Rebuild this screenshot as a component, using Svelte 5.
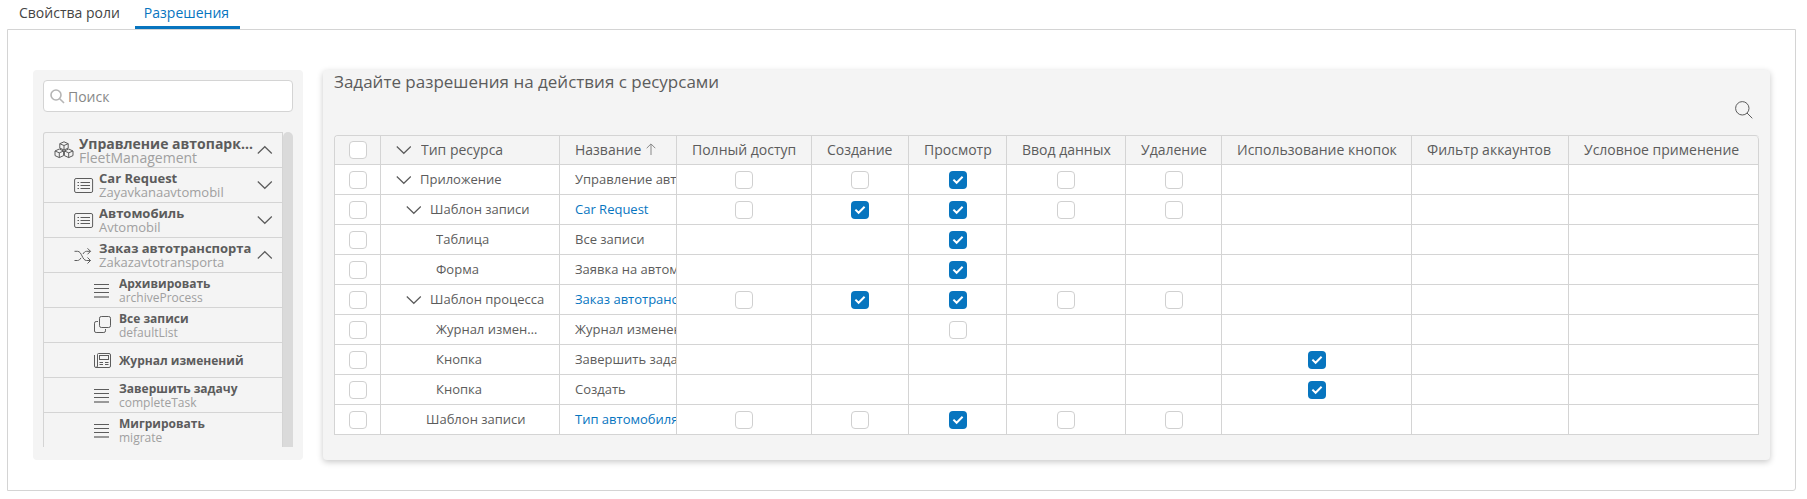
<script>
  const tree = [
    { level: 0, icon: 'cubes', title: 'Управление автопарком', alias: 'FleetManagement', arrow: 'up' },
    { level: 1, icon: 'record', title: 'Car Request', alias: 'Zayavkanaavtomobil', arrow: 'down' },
    { level: 1, icon: 'record', title: 'Автомобиль', alias: 'Avtomobil', arrow: 'down' },
    { level: 1, icon: 'process', title: 'Заказ автотранспорта', alias: 'Zakazavtotransporta', arrow: 'up' },
    { level: 2, icon: 'lines', title: 'Архивировать', alias: 'archiveProcess' },
    { level: 2, icon: 'copy', title: 'Все записи', alias: 'defaultList' },
    { level: 2, icon: 'journal', title: 'Журнал изменений' },
    { level: 2, icon: 'lines', title: 'Завершить задачу', alias: 'completeTask' },
    { level: 2, icon: 'lines', title: 'Мигрировать', alias: 'migrate' }
  ];

  const actions = [
    'Полный доступ', 'Создание', 'Просмотр', 'Ввод данных', 'Удаление',
    'Использование кнопок', 'Фильтр аккаунтов', 'Условное применение'
  ];

  // One mark per action column: 1 checked, 0 unchecked, - not applicable
  const rows = [
    { kind: 'app', arrow: true, type: 'Приложение', name: 'Управление автопарком', marks: '00100---' },
    { kind: 'template', arrow: true, type: 'Шаблон записи', name: 'Car Request', link: true, marks: '01100---' },
    { kind: 'leaf', type: 'Таблица', name: 'Все записи', marks: '--1-----' },
    { kind: 'leaf', type: 'Форма', name: 'Заявка на автомобиль', marks: '--1-----' },
    { kind: 'template', arrow: true, type: 'Шаблон процесса', name: 'Заказ автотранспорта', link: true, marks: '01100---' },
    { kind: 'leaf', type: 'Журнал изменений', name: 'Журнал изменений', marks: '--0-----' },
    { kind: 'leaf', type: 'Кнопка', name: 'Завершить задачу', marks: '-----1--' },
    { kind: 'leaf', type: 'Кнопка', name: 'Создать', marks: '-----1--' },
    { kind: 'single', type: 'Шаблон записи', name: 'Тип автомобиля', link: true, marks: '00100---' }
  ];
</script>

{#snippet check(on)}
  <span class="check" class:on>
    {#if on}
      <svg width="18" height="18" viewBox="0 0 18 18"><path d="M4.400 8.600l3.200 3.200 6-6" /></svg>
    {/if}
  </span>
{/snippet}

{#snippet chevron(up)}
  <svg class="chevron" width="16" height="10" viewBox="0 0 16 10">
    <path d={up ? 'M.8 8.500L7.800 1.700l7 6.800' : 'M.8 1.500L7.800 8.300l7-6.800'} />
  </svg>
{/snippet}

{#snippet glyph(name)}
  <svg class="glyph" width="20" height="18" viewBox="0 0 20 18">
    {#if name === 'cubes'}
      <path d="M10 .8l4.2 1.9v4.4L10 9 5.8 7.1V2.7zM5.8 2.7L10 4.5l4.2-1.8M10 4.5V9M5.3 8l4.3 2v4.6l-4.3 2L1 14.6V10zM1 10l4.3 1.8L9.6 10M5.3 11.8v4.8M14.7 8l4.3 2v4.6l-4.3 2-4.3-2V10zM10.4 10l4.3 1.8L19 10M14.7 11.8v4.8" />
    {:else if name === 'record'}
      <rect x=".6" y="2.500" width="18" height="14" rx="1.500" />
      <path d="M6.500 6.500H16M6.500 9.500H16M6.500 12.500H16M3.500 6.500H5M3.500 9.500H5M3.500 12.500H5" />
    {:else if name === 'process'}
      <path d="M.5 5.300H3.500C8 5.300 8 14.500 12.500 14.500H16.500M.5 14.500H3.500C5 14.500 6 13.500 7 11.900M9 8C10 6.300 11 5.300 12.500 5.300H16.500M13.500 2.300l3 3-3 3M13.500 11.500l3 3-3 3" />
    {:else if name === 'lines'}
      <path d="M0 3.500H15M0 7.500H15M0 11.500H15" />
      <path class="soft" d="M0 16H15" />
    {:else if name === 'copy'}
      <rect x="5.500" y=".5" width="11" height="11" rx="1.800" />
      <path d="M4 5.500H2.200Q.5 5.500.5 7.200V15Q.5 16.500 2.200 16.500H9.800Q11.500 16.500 11.500 14.800V13" />
    {:else}
      <g transform="translate(0 1)">
        <path d="M4.500 1.500H15Q16.500 1.500 16.500 3V14Q16.500 15.500 15 15.500H2Q.5 15.500.5 14V3M3.500 14V2.500Q3.500 1.500 4.500 1.500M3.500 13.500Q3.500 15.500 2 15.500M5.500 10.500H9M11 10.500H14.500M5.500 12.500H9M11 12.500H14.500" />
        <rect x="5.500" y="3.500" width="9" height="4" />
      </g>
    {/if}
  </svg>
{/snippet}

<main>
  <nav class="tabs">
    <a class="tab">Свойства роли</a>
    <a class="tab active">Разрешения</a>
  </nav>

  <section class="page">
    <aside>
      <label class="search">
        <svg width="15" height="15" viewBox="0 0 15 15"><circle cx="6" cy="6" r="5" /><path d="M9.700 9.700l4.300 4.300" /></svg>
        <span>Поиск</span>
      </label>
      <div class="tree-box">
        <div class="tree">
          {#each tree as item}
            <div class="node level{item.level}">
              {@render glyph(item.icon)}
              <div class="labels">
                <b>{item.title}</b>
                {#if item.alias}<span>{item.alias}</span>{/if}
              </div>
              {#if item.arrow}{@render chevron(item.arrow === 'up')}{/if}
            </div>
          {/each}
        </div>
        <div class="scrollbar"></div>
      </div>
    </aside>

    <article>
      <h1>Задайте разрешения на действия с ресурсами</h1>
      <div class="toolbar">
        <svg width="18" height="18" viewBox="0 0 18 18"><circle cx="7.300" cy="7.300" r="6.700" /><path d="M12 12l5.300 5.300" /></svg>
      </div>
      <div class="grid">
        <div class="row head">
          <div class="cell center">{@render check(false)}</div>
          <div class="cell type">{@render chevron(false)}<span>Тип ресурса</span></div>
          <div class="cell name">
            <span>Название</span>
            <svg class="sort" width="10" height="12" viewBox="0 0 10 12"><path d="M5 12V1M.7 5.200L5 .9l4.300 4.300" /></svg>
          </div>
          {#each actions as action}
            <div class="cell name">{action}</div>
          {/each}
        </div>
        {#each rows as row}
          <div class="row">
            <div class="cell center">{@render check(false)}</div>
            <div class="cell type {row.kind}">
              {#if row.arrow}{@render chevron(false)}{/if}
              <span>{row.type}</span>
            </div>
            <div class="cell name" class:link={row.link}>{row.name}</div>
            {#each row.marks as mark}
              <div class="cell center">
                {#if mark !== '-'}{@render check(mark === '1')}{/if}
              </div>
            {/each}
          </div>
        {/each}
      </div>
    </article>
  </section>
</main>

<style>
  :global(body) { margin: 0; background: #fff; }
  main {
    width: 1807px;
    height: 499px;
    overflow: hidden;
    font-family: "Open Sans", "Noto Sans", sans-serif;
    font-size: 14px;
    color: #5c5c5c;
  }
  main :global(*) { box-sizing: border-box; }
  svg { display: block; flex: none; fill: none; stroke: currentColor; }

  .tabs { display: flex; height: 29px; padding-left: 9px; gap: 5px; }
  .tab { height: 29px; padding: 0 10px; line-height: 26px; color: #444; white-space: nowrap; }
  .tab.active { padding: 0 11px 0 9px; color: #0775bf; border-bottom: 3px solid #0775bf; }

  .page {
    display: flex;
    align-items: flex-start;
    gap: 20px;
    width: 1789px;
    height: 462px;
    margin-left: 7px;
    padding: 40px 25px 0;
    border: 1px solid #d4d4d4;
    border-radius: 0 0 3px 0;
  }

  aside { width: 270px; height: 390px; padding: 10px; background: #f4f4f4; border-radius: 4px; }
  .search {
    display: flex;
    align-items: center;
    gap: 3px;
    height: 32px;
    padding-left: 6px;
    border: 1px solid #d4d4d4;
    border-radius: 4px;
    background: #fff;
    color: #888;
  }
  .search svg { stroke: #b5b5b5; stroke-width: 1.6; }
  .tree-box { display: flex; height: 315px; margin-top: 20px; overflow: hidden; }
  .tree { width: 240px; border: solid #d4d4d4; border-width: 1px 1px 0; border-radius: 3px 0 0 0; }
  .scrollbar { width: 10px; background: #dadada; border-radius: 5px 5px 0 0; }
  .node {
    display: flex;
    align-items: center;
    height: 35px;
    padding-right: 9px;
    border-bottom: 1px solid #d4d4d4;
  }
  .level0 { padding-left: 10px; font-size: 14px; }
  .level1 { padding-left: 30px; font-size: 13px; }
  .level2 { padding-left: 50px; font-size: 12px; }
  .glyph { margin-right: 5px; stroke-width: 1; }
  .soft { stroke-width: 2; opacity: .6; }
  .labels { display: flex; flex: 1; flex-direction: column; min-width: 0; padding-top: 2px; }
  .labels b, .labels span { line-height: 14px; white-space: nowrap; }
  .labels b { padding-bottom: 3px; margin-bottom: -3px; overflow: hidden; text-overflow: ellipsis; }
  .labels span { color: #a0a0a0; }
  .level1 .labels { padding-top: 1px; }
  .level1 .labels span { line-height: 15px; }
  .chevron { stroke-width: 1.200; }
  .node .chevron { margin-left: 4px; }

  article {
    width: 1447px;
    height: 390px;
    padding: 0 11px;
    background: #f4f4f4;
    border-radius: 4px;
    box-shadow: 0 2px 6px rgba(0, 0, 0, .22);
  }
  h1 { margin: 0; height: 27px; font-size: 17px; font-weight: 400; line-height: 24px; }
  .toolbar { display: flex; justify-content: flex-end; height: 38px; padding: 4px 6px 0 0; }
  .grid {
    width: 1425px;
    border: solid #d4d4d4;
    border-width: 1px 0 0 1px;
    border-radius: 4px 4px 0 0;
    overflow: hidden;
  }
  .row {
    display: grid;
    grid-template-columns: 46px 179px 117px 135px 97px 98px 119px 96px 190px 157px 190px;
    height: 30px;
    background: #fff;
    font-size: 13px;
  }
  .head { height: 29px; background: #f4f4f4; font-size: 14px; }
  .cell {
    display: flex;
    align-items: center;
    min-width: 0;
    overflow: hidden;
    border: solid #d4d4d4;
    border-width: 0 1px 1px 0;
    white-space: nowrap;
  }
  .head .cell:last-child { border-top-right-radius: 4px; }
  .center { justify-content: center; }
  .name { padding: 0 0 2px 15px; }
  .link { color: #0775bf; }
  .type { gap: 8px; padding: 0 15px; }
  .head .type { gap: 9px; }
  .type span { padding-bottom: 2px; overflow: hidden; text-overflow: ellipsis; }
  .type.template { padding: 0 10px 0 25px; }
  .type.leaf { padding: 0 21px 0 55px; }
  .type.single { padding-left: 45px; }
  .sort { margin-left: 5px; stroke: #888; }
  .check {
    width: 18px;
    height: 18px;
    flex: none;
    border: 1px solid #d0d0d0;
    border-radius: 4px;
    background: #fff;
  }
  .check.on { border: 0; background: #0775bf; color: #fff; }
  .check svg { stroke-width: 2; }
</style>
